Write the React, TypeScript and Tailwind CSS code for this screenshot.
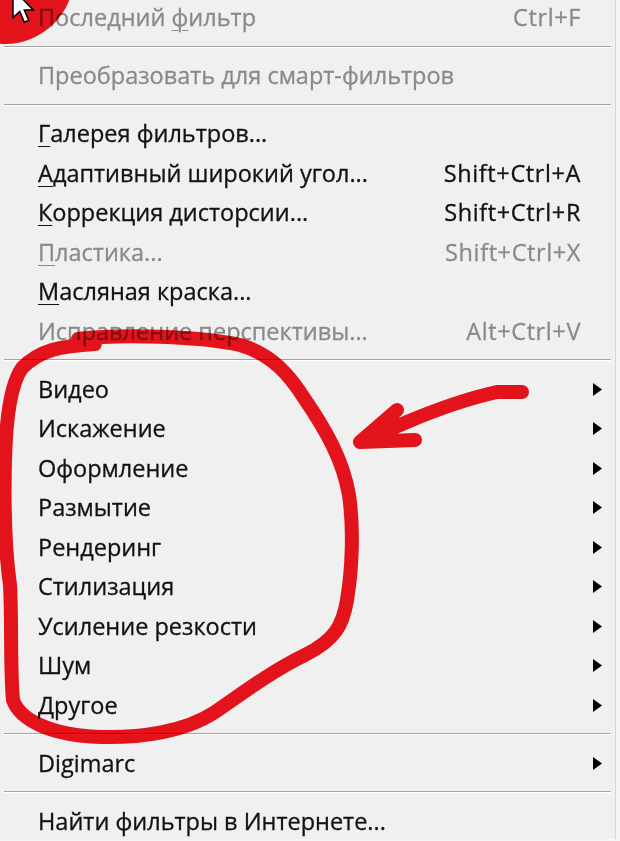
import React from "react";

type Item =
  | { kind: "sep" }
  | {
      kind: "item";
      label: string;
      // index of the access-key letter to underline
      key?: number;
      shortcut?: string;
      disabled?: boolean;
      submenu?: boolean;
    };

const ITEMS: Item[] = [
  { kind: "item", label: "Последний фильтр", key: 10, shortcut: "Ctrl+F", disabled: true },
  { kind: "sep" },
  { kind: "item", label: "Преобразовать для смарт-фильтров", disabled: true },
  { kind: "sep" },
  { kind: "item", label: "Галерея фильтров...", key: 0 },
  { kind: "item", label: "Адаптивный широкий угол...", key: 0, shortcut: "Shift+Ctrl+A" },
  { kind: "item", label: "Коррекция дисторсии...", key: 0, shortcut: "Shift+Ctrl+R" },
  { kind: "item", label: "Пластика...", key: 0, shortcut: "Shift+Ctrl+X", disabled: true },
  { kind: "item", label: "Масляная краска...", key: 0 },
  { kind: "item", label: "Исправление перспективы...", shortcut: "Alt+Ctrl+V", disabled: true },
  { kind: "sep" },
  { kind: "item", label: "Видео", submenu: true },
  { kind: "item", label: "Искажение", submenu: true },
  { kind: "item", label: "Оформление", submenu: true },
  { kind: "item", label: "Размытие", submenu: true },
  { kind: "item", label: "Рендеринг", submenu: true },
  { kind: "item", label: "Стилизация", submenu: true },
  { kind: "item", label: "Усиление резкости", submenu: true },
  { kind: "item", label: "Шум", submenu: true },
  { kind: "item", label: "Другое", submenu: true },
  { kind: "sep" },
  { kind: "item", label: "Digimarc", submenu: true },
  { kind: "sep" },
  { kind: "item", label: "Найти фильтры в Интернете..." },
];

function Label({ text, k }: { text: string; k?: number }) {
  if (k === undefined) return <>{text}</>;
  return (
    <>
      {text.slice(0, k)}
      <span className="underline decoration-1 underline-offset-[4px]">{text[k]}</span>
      {text.slice(k + 1)}
    </>
  );
}

function Annotations() {
  return (
    <svg
      className="pointer-events-none absolute left-0 top-0 mix-blend-multiply"
      width={620}
      height={841}
      viewBox="0 0 620 841"
      aria-hidden="true"
    >
      {/* loop round the submenus */}
      <path
        d="M78 339 C120 334 200 336 240 345 C272 354 290 376 304 398 C326 430 343 460 349 495 C354 530 352 570 347 600 C343 625 335 640 305 655 C270 672 240 695 215 712 C185 732 140 738 100 737 C50 735 20 720 13 700 C10 670 12 620 10 585 C5 550 4 500 5 460 C6 420 10 385 22 368 C40 350 60 346 95 344"
        fill="none"
        stroke="#f2141d"
        strokeWidth={14}
        strokeLinecap="round"
        strokeLinejoin="round"
      />
      {/* arrow */}
      <path
        d="M522 392 L497 392 C470 398 440 408 407 422 L360 442 M397 410 L360 442 L415 440"
        fill="none"
        stroke="#f2141d"
        strokeWidth={14}
        strokeLinecap="round"
        strokeLinejoin="round"
      />
    </svg>
  );
}

function Cursor() {
  return (
    <svg className="pointer-events-none absolute left-0 top-0" width={60} height={40} viewBox="0 0 60 40" aria-hidden="true">
      <g transform="translate(13 -11) scale(1.5)">
        <path
          d="M0 0 L0 19 L4.5 15 L7.5 22 L10.5 21 L7.5 14 L13.5 14 Z"
          fill="#fff"
          stroke="#000"
          strokeWidth={1}
          strokeLinejoin="miter"
        />
      </g>
    </svg>
  );
}

export default function App() {
  return (
    <div className="relative h-[841px] w-[620px] overflow-hidden bg-[#f4f4f4]">
      <div
        className="h-full w-[616px] border-r border-[#d6d6d6] bg-[#f0f0f0] text-[23.5px] text-[#121212] [-webkit-text-stroke:0.3px]"
        style={{ fontFamily: '"Open Sans", "Noto Sans", sans-serif' }}
      >
        <div className="-mt-[2px] flex flex-col">
          {ITEMS.map((it, i) =>
            it.kind === "sep" ? (
              <div key={i} className="flex h-[18.5px] items-center pl-[4px] pr-[4px]">
                <div className="h-[2px] w-full border-t border-[#a3a3a3] bg-white" />
              </div>
            ) : (
              <div
                key={i}
                className={`flex h-[39.5px] items-center pl-[38px] ${it.disabled ? "text-[#8a8a8a]" : ""}`}
              >
                <span className="flex-1 whitespace-nowrap">
                  <Label text={it.label} k={it.key} />
                </span>
                {it.shortcut && <span className="whitespace-nowrap tracking-[0.6px]">{it.shortcut}</span>}
                <span className="flex w-[34px] items-center pl-[12px]">
                  {it.submenu && (
                    <svg width={9} height={13} viewBox="0 0 9 13" aria-hidden="true">
                      <path d="M0 0 L9 6.5 L0 13 Z" fill="#000" />
                    </svg>
                  )}
                </span>
              </div>
            )
          )}
        </div>
      </div>
      {/* red marker blob behind the cursor */}
      <div className="pointer-events-none absolute left-[-64px] top-[-94px] h-[138px] w-[138px] rounded-full bg-[#f2141d] mix-blend-multiply" />
      <Annotations />
      <Cursor />
    </div>
  );
}
